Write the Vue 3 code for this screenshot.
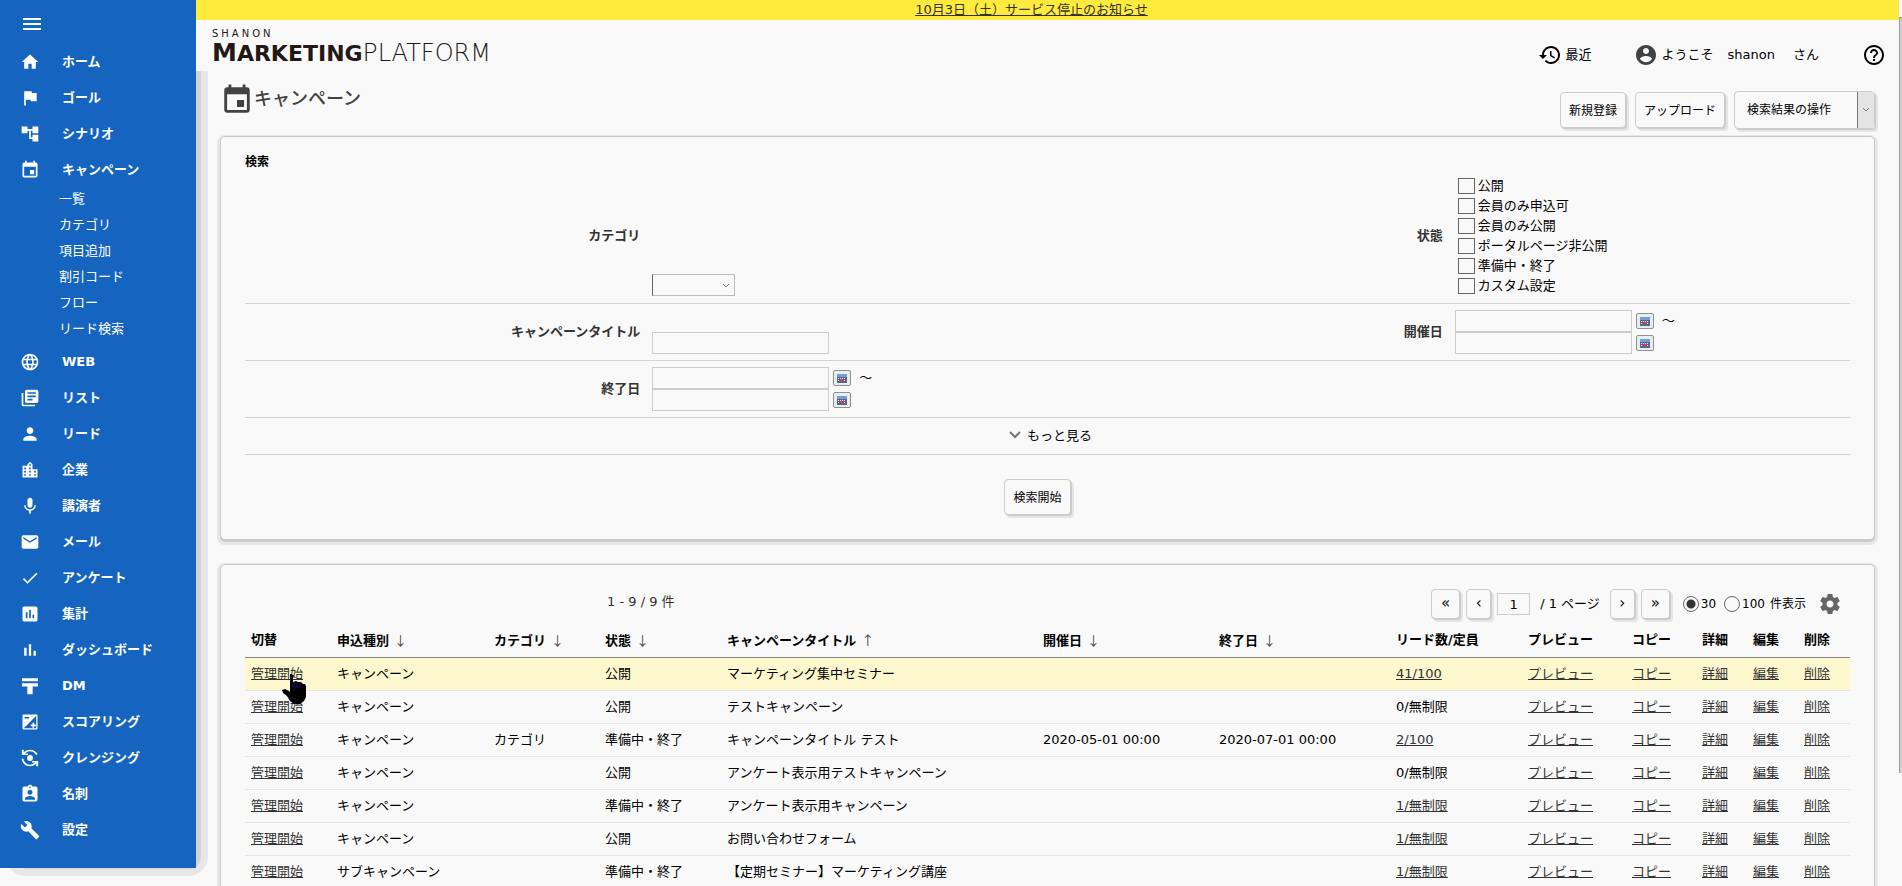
<script setup>
import { ref } from 'vue'

const calendarPath =
  'M17 12h-5v5h5v-5zM16 1v2H8V1H6v2H5c-1.11 0-1.99.9-1.99 2L3 19c0 1.1.89 2 2 2h14c1.1 0 2-.9 2-2V5c0-1.1-.9-2-2-2h-1V1h-2zm3 18H5V8h14v11z'

const menu = [
  { label: 'ホーム', icon: 'M10 20v-6h4v6h5v-8h3L12 3 2 12h3v8z' },
  { label: 'ゴール', icon: 'M14.4 6L14 4H5v17h2v-7h5.6l.4 2h7V6z' },
  { label: 'シナリオ', icon: 'M22 11V3h-7v3H9V3H2v8h7V8h2v10h4v3h7v-8h-7v3h-2V8h2v3z' },
  {
    label: 'キャンペーン',
    icon: calendarPath,
    children: ['一覧', 'カテゴリ', '項目追加', '割引コード', 'フロー', 'リード検索'],
  },
  {
    label: 'WEB',
    icon: 'M11.99 2C6.47 2 2 6.48 2 12s4.47 10 9.99 10C17.52 22 22 17.52 22 12S17.52 2 11.99 2zm6.93 6h-2.95c-.32-1.25-.78-2.45-1.38-3.56 1.84.63 3.37 1.91 4.33 3.56zM12 4.04c.83 1.2 1.48 2.53 1.91 3.96h-3.82c.43-1.43 1.08-2.76 1.91-3.96zM4.26 14C4.1 13.36 4 12.69 4 12s.1-1.36.26-2h3.38c-.08.66-.14 1.32-.14 2s.06 1.34.14 2H4.26zm.82 2h2.95c.32 1.25.78 2.45 1.38 3.56-1.84-.63-3.37-1.9-4.33-3.56zm2.95-8H5.08c.96-1.66 2.49-2.93 4.33-3.56C8.81 5.55 8.35 6.75 8.03 8zM12 19.96c-.83-1.2-1.48-2.53-1.91-3.96h3.82c-.43 1.43-1.08 2.76-1.91 3.96zM14.34 14H9.66c-.09-.66-.16-1.32-.16-2s.07-1.35.16-2h4.68c.09.65.16 1.32.16 2s-.07 1.34-.16 2zm.25 5.56c.6-1.11 1.06-2.31 1.38-3.56h2.95c-.96 1.65-2.49 2.93-4.33 3.56zM16.36 14c.08-.66.14-1.32.14-2s-.06-1.34-.14-2h3.38c.16.64.26 1.31.26 2s-.1 1.36-.26 2h-3.38z',
  },
  {
    label: 'リスト',
    icon: 'M4 6H2v14c0 1.1.9 2 2 2h14v-2H4V6zm16-4H8c-1.1 0-2 .9-2 2v12c0 1.1.9 2 2 2h12c1.1 0 2-.9 2-2V4c0-1.1-.9-2-2-2zm-1 9H9V9h10v2zm-4 4H9v-2h6v2zm4-8H9V5h10v2z',
  },
  {
    label: 'リード',
    icon: 'M12 12c2.21 0 4-1.79 4-4s-1.79-4-4-4-4 1.79-4 4 1.79 4 4 4zm0 2c-2.67 0-8 1.34-8 4v2h16v-2c0-2.66-5.33-4-8-4z',
  },
  {
    label: '企業',
    icon: 'M15 11V5l-3-3-3 3v2H3v14h18V11h-6zm-8 8H5v-2h2v2zm0-4H5v-2h2v2zm0-4H5V9h2v2zm6 8h-2v-2h2v2zm0-4h-2v-2h2v2zm0-4h-2V9h2v2zm0-4h-2V5h2v2zm6 12h-2v-2h2v2zm0-4h-2v-2h2v2z',
  },
  {
    label: '講演者',
    icon: 'M12 14c1.66 0 2.99-1.34 2.99-3L15 5c0-1.66-1.34-3-3-3S9 3.34 9 5v6c0 1.66 1.34 3 3 3zm5.3-3c0 3-2.54 5.1-5.3 5.1S6.7 14 6.7 11H5c0 3.41 2.72 6.23 6 6.72V21h2v-3.28c3.28-.48 6-3.3 6-6.72h-1.7z',
  },
  {
    label: 'メール',
    icon: 'M20 4H4c-1.1 0-1.99.9-1.99 2L2 18c0 1.1.9 2 2 2h16c1.1 0 2-.9 2-2V6c0-1.1-.9-2-2-2zm0 4l-8 5-8-5V6l8 5 8-5v2z',
  },
  { label: 'アンケート', icon: 'M9 16.17L4.83 12l-1.42 1.41L9 19 21 7l-1.41-1.41z' },
  {
    label: '集計',
    icon: 'M19 3H5c-1.1 0-2 .9-2 2v14c0 1.1.9 2 2 2h14c1.1 0 2-.9 2-2V5c0-1.1-.9-2-2-2zM9 17H7v-7h2v7zm4 0h-2V7h2v10zm4 0h-2v-4h2v4z',
  },
  { label: 'ダッシュボード', icon: 'M5 9.2h3V19H5zM10.6 5h2.8v14h-2.8zm5.6 8H19v6h-2.8z' },
  { label: 'DM', icon: 'M2.4 2.8h19.2v3.6H2.4zM2.4 8.8h19.2v3.8h-6.4V22H8.8v-9.4H2.4z' },
  {
    label: 'スコアリング',
    icon: 'M15 17v2h2v-2h2v-2h-2v-2h-2v2h-2v2h2zM19.500 3h-15C3.700 3 3 3.700 3 4.500v15c0 .8.7 1.500 1.500 1.500h15c.8 0 1.500-.7 1.500-1.500v-15c0-.8-.7-1.500-1.500-1.500zM5.500 6H11v1.800H5.500V6zM19.500 19.500h-15l15-15v15z',
  },
  {
    label: 'クレンジング',
    icon: 'M12 8.500a3.500 3.500 0 1 0 0 7 3.500 3.500 0 0 0 0-7zM4.500 2v3.300C6.300 3.200 9 2 12 2c4 0 7.500 2.200 9.200 5.600l-1.900.9C18 5.800 15.200 4 12 4 9.700 4 7.600 5 6.100 6.500H9.500v2H2.200V2zM2 13h2.100c.5 4 3.800 7 7.900 7 2.300 0 4.400-1 5.900-2.500h-3.400v-2h7.300V22h-2.300v-3.300C17.700 20.800 15 22 12 22 6.800 22 2.500 18.200 2 13z',
  },
  {
    label: '名刺',
    icon: 'M19 3h-4.18C14.4 1.84 13.3 1 12 1c-1.3 0-2.400.84-2.820 2H5c-1.100 0-2 .9-2 2v14c0 1.100.9 2 2 2h14c1.100 0 2-.9 2-2V5c0-1.100-.9-2-2-2zm-7 0c.55 0 1 .45 1 1s-.45 1-1 1-1-.45-1-1 .45-1 1-1zm0 4c1.660 0 3 1.340 3 3s-1.340 3-3 3-3-1.340-3-3 1.340-3 3-3zm6 12H6v-1.400c0-2 4-3.100 6-3.100s6 1.100 6 3.100V19z',
  },
  {
    label: '設定',
    icon: 'M22.700 19l-9.100-9.100c.9-2.300.4-5-1.500-6.900-2-2-5-2.400-7.400-1.300L9 6 6 9 1.600 4.700C.4 7.100.9 10.100 2.900 12.100c1.900 1.900 4.600 2.400 6.900 1.500l9.100 9.100c.4.4 1 .4 1.400 0l2.300-2.300c.5-.4.5-1.100.1-1.400z',
  },
]

const statuses = ['公開', '会員のみ申込可', '会員のみ公開', 'ポータルページ非公開', '準備中・終了', 'カスタム設定']

const columns = [
  { key: 'switch', label: '切替' },
  { key: 'type', label: '申込種別', sort: '↓' },
  { key: 'category', label: 'カテゴリ', sort: '↓' },
  { key: 'status', label: '状態', sort: '↓' },
  { key: 'title', label: 'キャンペーンタイトル', sort: '↑' },
  { key: 'start', label: '開催日', sort: '↓' },
  { key: 'end', label: '終了日', sort: '↓' },
  { key: 'leads', label: 'リード数/定員' },
  { key: 'preview', label: 'プレビュー' },
  { key: 'copy', label: 'コピー' },
  { key: 'detail', label: '詳細' },
  { key: 'edit', label: '編集' },
  { key: 'delete', label: '削除' },
]

const rows = [
  { type: 'キャンペーン', status: '公開', title: 'マーケティング集中セミナー', leads: '41/100', linked: true },
  { type: 'キャンペーン', status: '公開', title: 'テストキャンペーン', leads: '0/無制限' },
  {
    type: 'キャンペーン',
    category: 'カテゴリ',
    status: '準備中・終了',
    title: 'キャンペーンタイトル テスト',
    start: '2020-05-01 00:00',
    end: '2020-07-01 00:00',
    leads: '2/100',
    linked: true,
  },
  { type: 'キャンペーン', status: '公開', title: 'アンケート表示用テストキャンペーン', leads: '0/無制限' },
  { type: 'キャンペーン', status: '準備中・終了', title: 'アンケート表示用キャンペーン', leads: '1/無制限', linked: true },
  { type: 'キャンペーン', status: '公開', title: 'お問い合わせフォーム', leads: '1/無制限', linked: true },
  { type: 'サブキャンペーン', status: '準備中・終了', title: '【定期セミナー】マーケティング講座', leads: '1/無制限', linked: true },
]
const actions = ['プレビュー', 'コピー', '詳細', '編集', '削除']

const page = ref('1')
const perPage = ref('30')
</script>

<template>
  <div class="app">
    <aside class="side">
      <nav class="nav" aria-label="メニュー">
        <button class="burger" type="button" aria-label="メニュー開閉">
          <svg viewBox="0 0 24 24" width="24" height="24"><path d="M3 18h18v-2H3v2zm0-5h18v-2H3v2zm0-7v2h18V6H3z" /></svg>
        </button>
        <ul class="menu">
          <li v-for="m in menu" :key="m.label">
            <a class="item" href="#">
              <svg viewBox="0 0 24 24" width="20" height="20"><path :d="m.icon" fill-rule="evenodd" /></svg>
              <span>{{ m.label }}</span>
            </a>
            <ul v-if="m.children" class="sub">
              <li v-for="c in m.children" :key="c"><a href="#">{{ c }}</a></li>
            </ul>
          </li>
        </ul>
      </nav>
    </aside>

    <div class="main">
      <div class="notice"><a href="#">10月3日（土）サービス停止のお知らせ</a></div>
      <header class="head">
        <a class="logo" href="#">
          <span class="logo-top">SHANON</span>
          <span class="logo-main"><b><span class="cap">M</span>ARKETING</b><i><span class="cap">P</span>LATFORM</i></span>
        </a>
        <div class="tools">
          <a class="tool recent" href="#">
            <svg viewBox="0 0 24 24" width="24" height="24"><path d="M13 3c-4.970 0-9 4.030-9 9H1l3.890 3.890.07.14L9 12H6c0-3.870 3.130-7 7-7s7 3.130 7 7-3.130 7-7 7c-1.930 0-3.680-.79-4.940-2.060l-1.420 1.420C8.270 19.990 10.510 21 13 21c4.970 0 9-4.030 9-9s-4.030-9-9-9zm-1 5v5l4.280 2.540.72-1.210-3.500-2.080V8H12z" /></svg>
            最近
          </a>
          <div class="tool user">
            <svg viewBox="0 0 24 24" width="24" height="24"><path d="M12 2C6.480 2 2 6.480 2 12s4.480 10 10 10 10-4.480 10-10S17.520 2 12 2zm0 3c1.660 0 3 1.340 3 3s-1.340 3-3 3-3-1.340-3-3 1.340-3 3-3zm0 14.200c-2.500 0-4.710-1.280-6-3.220.03-1.990 4-3.080 6-3.080 1.990 0 5.970 1.090 6 3.080-1.290 1.940-3.500 3.220-6 3.220z" /></svg>
            <span>ようこそ</span><span>shanon</span><span class="san">さん</span>
          </div>
          <a class="tool" href="#" aria-label="ヘルプ">
            <svg viewBox="0 0 24 24" width="24" height="24"><path d="M11 18h2v-2h-2v2zm1-16C6.480 2 2 6.480 2 12s4.480 10 10 10 10-4.480 10-10S17.520 2 12 2zm0 18c-4.410 0-8-3.590-8-8s3.590-8 8-8 8 3.590 8 8-3.590 8-8 8zm0-14c-2.210 0-4 1.790-4 4h2c0-1.100.9-2 2-2s2 .9 2 2c0 2-3 1.750-3 5h2c0-2.250 3-2.500 3-5 0-2.210-1.790-4-4-4z" /></svg>
          </a>
        </div>
      </header>

      <main class="content">
        <div class="title-row">
          <h1>
            <svg viewBox="0 0 24 24" width="34" height="34"><path :d="calendarPath" /></svg>
            <span>キャンペーン</span>
          </h1>
          <div class="actions">
            <button class="btn" type="button">新規登録</button>
            <button class="btn" type="button">アップロード</button>
            <div class="bulk">
              <select aria-label="検索結果の操作"><option>検索結果の操作</option></select>
              <span class="bulk-arrow"><svg viewBox="0 0 8 6" width="8" height="6"><path d="M1 1l3 3 3-3" /></svg></span>
            </div>
          </div>
        </div>

        <form class="panel search" @submit.prevent>
          <h2>検索</h2>
          <div class="row">
            <label class="name" for="category">カテゴリ</label>
            <div class="field">
              <div class="pick">
                <select id="category"><option></option></select>
                <svg viewBox="0 0 8 6" width="8" height="6"><path d="M1 1l3 3 3-3" /></svg>
              </div>
            </div>
            <span id="status-name" class="name">状態</span>
            <div class="field checks" role="group" aria-labelledby="status-name">
              <label v-for="s in statuses" :key="s"><input type="checkbox" />{{ s }}</label>
            </div>
          </div>
          <div class="row">
            <label class="name" for="title">キャンペーンタイトル</label>
            <div class="field"><input id="title" class="text" type="text" /></div>
            <label class="name" for="start-from">開催日</label>
            <div class="field">
              <div v-for="n in 2" :key="n" class="date">
                <input :id="n === 1 ? 'start-from' : 'start-to'" class="text" type="text" :aria-label="n === 1 ? '開催日 開始' : '開催日 終了'" />
                <button class="cal" type="button" aria-label="日付を選択">
                  <svg viewBox="0 0 10 9" width="10" height="9"><rect width="10" height="9" fill="#55668f" /><rect width="10" height="3" fill="#7b9bd2" /><path d="M1 4.500h8M1 6.500h8" stroke="#dfe5f2" stroke-dasharray="1 1" /><path d="M3 5h4v2H3z" fill="#e2364d" /></svg>
                </button>
                <span v-if="n === 1">～</span>
              </div>
            </div>
          </div>
          <div class="row">
            <label class="name" for="end-from">終了日</label>
            <div class="field">
              <div v-for="n in 2" :key="n" class="date">
                <input :id="n === 1 ? 'end-from' : 'end-to'" class="text" type="text" :aria-label="n === 1 ? '終了日 開始' : '終了日 終了'" />
                <button class="cal" type="button" aria-label="日付を選択">
                  <svg viewBox="0 0 10 9" width="10" height="9"><rect width="10" height="9" fill="#55668f" /><rect width="10" height="3" fill="#7b9bd2" /><path d="M1 4.500h8M1 6.500h8" stroke="#dfe5f2" stroke-dasharray="1 1" /><path d="M3 5h4v2H3z" fill="#e2364d" /></svg>
                </button>
                <span v-if="n === 1">～</span>
              </div>
            </div>
          </div>
          <button class="more" type="button">
            <svg viewBox="0 0 12 8" width="12" height="8"><path d="M1 1l5 5 5-5" /></svg>
            もっと見る
          </button>
          <div class="submit"><button class="btn" type="submit">検索開始</button></div>
        </form>

        <section class="panel list">
          <div class="bar">
            <span class="count">1 - 9 / 9 件</span>
            <div class="pager">
              <button class="btn nav-btn wide" type="button" aria-label="最初">«</button>
              <button class="btn nav-btn" type="button" aria-label="前へ">‹</button>
              <input v-model="page" class="page" type="text" aria-label="ページ" />
              <span class="total">/ 1 ページ</span>
              <button class="btn nav-btn" type="button" aria-label="次へ">›</button>
              <button class="btn nav-btn wide" type="button" aria-label="最後">»</button>
            </div>
            <div class="sizes">
              <label><input v-model="perPage" type="radio" name="size" value="30" />30</label>
              <label><input v-model="perPage" type="radio" name="size" value="100" />100</label>
              <span>件表示</span>
            </div>
            <button class="gear" type="button" aria-label="表示設定">
              <svg viewBox="0 0 24 24" width="24" height="24"><path d="M19.430 12.980c.04-.32.07-.64.07-.98s-.03-.66-.07-.98l2.110-1.650c.19-.15.24-.42.12-.64l-2-3.460c-.12-.22-.39-.3-.61-.22l-2.490 1c-.52-.4-1.080-.73-1.690-.98l-.38-2.650C14.460 2.180 14.250 2 14 2h-4c-.25 0-.46.18-.49.42l-.38 2.650c-.61.25-1.170.59-1.690.98l-2.490-1c-.23-.09-.49 0-.61.22l-2 3.460c-.13.22-.07.49.12.64l2.110 1.650c-.04.32-.07.65-.07.98s.03.66.07.98l-2.110 1.650c-.19.15-.24.42-.12.64l2 3.460c.12.22.39.3.61.22l2.490-1c.52.4 1.080.73 1.690.98l.38 2.650c.03.24.24.42.49.42h4c.25 0 .46-.18.49-.42l.38-2.650c.61-.25 1.170-.59 1.690-.98l2.490 1c.23.09.49 0 .61-.22l2-3.460c.12-.22.07-.49-.12-.64l-2.110-1.650zM12 15.500c-1.930 0-3.500-1.570-3.500-3.500s1.570-3.500 3.500-3.500 3.500 1.570 3.500 3.500-1.570 3.500-3.500 3.500z" /></svg>
            </button>
          </div>
          <table>
            <colgroup><col v-for="c in columns" :key="c.key" :class="'c-' + c.key" /></colgroup>
            <thead>
              <tr>
                <th v-for="c in columns" :key="c.key" scope="col">{{ c.label }}<span v-if="c.sort" class="sort">{{ c.sort }}</span></th>
              </tr>
            </thead>
            <tbody>
              <tr v-for="(r, i) in rows" :key="r.title" :class="{ hover: i === 0 }">
                <td>
                  <a href="#">管理開始</a>
                  <svg v-if="i === 0" class="pointer" viewBox="0 0 26 32" width="26" height="32"><path d="M9 1h2l1 2v6l3-1 2 1 3 0 2 2 2 0 1 2v11l-2 4-4 3h-6l-4-3-3-5-4-3-1-3 3-1 4 2 1 1V2z" fill="#000" /><path d="M10 3h1v8h1v-2h2v3h1v-2h2v3h1v-2h2v4h-9z" fill="#0b0b33" /></svg>
                </td>
                <td>{{ r.type }}</td>
                <td>{{ r.category }}</td>
                <td>{{ r.status }}</td>
                <td>{{ r.title }}</td>
                <td>{{ r.start }}</td>
                <td>{{ r.end }}</td>
                <td><a v-if="r.linked" href="#">{{ r.leads }}</a><template v-else>{{ r.leads }}</template></td>
                <td v-for="a in actions" :key="a"><a href="#">{{ a }}</a></td>
              </tr>
            </tbody>
          </table>
        </section>
      </main>
    </div>
    <div class="track"><div class="thumb"></div></div>
  </div>
</template>

<style>
body {
  background: #f9f9f9;
}
</style>

<style scoped>
.app,
.app * {
  box-sizing: border-box;
}
.app {
  display: flex;
  height: 100vh;
  overflow: hidden;
  background: #f9f9f9;
  color: #000;
  font: 13px/20px 'DejaVu Sans', 'Noto Sans CJK JP', sans-serif;
}
.app button,
.app input,
.app select {
  margin: 0;
  padding: 0;
  font-family: inherit;
  font-size: 13px;
  color: inherit;
  background: transparent;
  border: 0;
  border-radius: 0;
  appearance: none;
}
ul {
  margin: 0;
  padding: 0;
  list-style: none;
}
svg {
  display: block;
  flex: none;
}

/* sidebar */
.side {
  position: relative;
  z-index: 0;
  flex: none;
  width: 196px;
  align-self: flex-start;
}
.side::before,
.side::after {
  content: '';
  position: absolute;
  z-index: -1;
}
.side::before {
  inset: 0 -12px -8px 6px;
  background: #e7e7e7;
  border-radius: 0 0 20px 20px;
}
.side::after {
  inset: 0 -5px -1px 24px;
  background: #d3d3d3;
  border-radius: 0 0 12px 0;
}
.nav {
  padding-bottom: 20px;
  background: #1565c0;
}
.app .burger {
  display: block;
  height: 44px;
  padding: 4px 0 0 20px;
}
.nav svg {
  fill: #fff;
}
.item {
  display: flex;
  align-items: center;
  gap: 22px;
  height: 36px;
  padding-left: 20px;
  color: #fff;
  font-weight: bold;
  text-decoration: none;
}
.sub {
  margin: -2px 0 2px;
}
.sub a {
  display: block;
  padding-left: 59px;
  line-height: 26px;
  color: #fff;
  text-decoration: none;
}

/* top */
.main {
  flex: 1;
  min-width: 0;
  display: flex;
  flex-direction: column;
}
.notice {
  position: relative;
  z-index: 1;
  flex: none;
  height: 20px;
  padding-right: 32px;
  background: #ffeb3b;
  text-align: center;
  line-height: 20px;
}
.notice a {
  color: #333;
}
.head {
  position: relative;
  z-index: 1;
  flex: none;
  display: flex;
  justify-content: space-between;
  height: 51px;
  padding: 8px 13px 0 16px;
  background: #f9f9f9;
}
.logo {
  color: #231815;
  text-decoration: none;
}
.logo span {
  white-space: nowrap;
}
.logo-top {
  display: block;
  font-size: 10px;
  line-height: 12px;
  letter-spacing: 3px;
}
.logo-main {
  display: block;
  font-size: 22px;
  line-height: 25px;
}
.logo-main i {
  font-size: 24px;
  font-style: normal;
  font-weight: 200;
}
.cap {
  font-size: 25px;
}
.tools {
  display: flex;
  align-items: center;
  height: 36px;
  padding-top: 18px;
}
.tool {
  display: flex;
  align-items: center;
  color: #000;
  text-decoration: none;
}
.recent {
  gap: 4px;
  margin-right: 42px;
}
.user {
  gap: 14px;
  margin-right: 43px;
}
.user svg {
  margin-right: -10px;
  fill: #424242;
}
.san {
  margin-left: 4px;
}

/* content */
.content {
  flex: 1;
  display: flex;
  flex-direction: column;
  padding: 0 24px;
}
.title-row {
  flex: none;
  display: flex;
  justify-content: space-between;
  height: 65px;
}
h1 {
  display: flex;
  margin: 12px 0 0;
  color: #424242;
  font-size: 18px;
  font-weight: 500;
  line-height: 32px;
}
h1 svg {
  fill: #424242;
}
.actions {
  display: flex;
  align-items: center;
  gap: 9px;
  padding-top: 13px;
}
.app .btn {
  height: 36px;
  padding: 0 8px 2px;
  border: 1px solid #ccc;
  border-radius: 4px;
  box-shadow: 1px 1px 0 #ccc, 3px 3px 0 #e5e5e5;
  font-size: 12px;
  background: #f9f9f9;
}
.bulk {
  position: relative;
  width: 141px;
  height: 38px;
  border: 1px solid #ccc;
  border-radius: 4px;
  box-shadow: 1px 1px 0 #ccc, 3px 3px 0 #e5e5e5;
}
.app .bulk select {
  width: 100%;
  height: 36px;
  padding-left: 12px;
  font-size: 12px;
}
.bulk-arrow {
  position: absolute;
  top: 0;
  right: 0;
  bottom: 0;
  display: grid;
  place-items: center;
  width: 17px;
  border-left: 1px solid #777;
  background: #e4e4e4;
  pointer-events: none;
}
.bulk-arrow path,
.pick path,
.more path {
  fill: none;
  stroke: #777;
}
.panel {
  border: 1px solid #c8c8c8;
  border-radius: 5px;
  background: #f9f9f9;
  box-shadow: 0 2px 0 #ccc, 0 2px 0 3px #e7e7e7;
}
.search {
  flex: none;
  padding: 17px 24px 24px;
}
h2 {
  margin: 0;
  font-size: 12px;
  line-height: 16px;
}
.row {
  display: grid;
  grid-template-columns: repeat(4, 1fr);
  padding: 6px 0;
  border-bottom: 1px solid #d3d3d3;
}
h2 + .row {
  padding-bottom: 7px;
}
.name {
  align-self: center;
  padding-right: 6px;
  color: #333;
  font-weight: bold;
  text-align: right;
}
.field {
  align-self: end;
  padding-left: 6px;
}
.pick {
  position: relative;
  width: 83px;
}
.app .pick select {
  display: block;
  width: 100%;
  height: 22px;
  border: 1px solid #bbb;
  border-left-color: #666;
}
.pick svg {
  position: absolute;
  right: 5px;
  top: 9px;
  pointer-events: none;
}
.checks {
  padding-left: 9px;
}
.checks label {
  display: flex;
  align-items: center;
  gap: 3px;
  height: 20px;
}
.app .checks input {
  width: 17px;
  height: 16px;
  border: 1px solid #666;
}
.app .text {
  display: block;
  width: 177px;
  height: 22px;
  border: 1px solid #ccc;
}
.date {
  display: flex;
  align-items: center;
  gap: 4px;
}
.date span {
  margin-left: 4px;
}
.app .cal {
  display: grid;
  place-items: center;
  width: 18px;
  height: 16px;
  border: 1px solid #909090;
  border-radius: 2px;
  background: #e6eeee;
}
.app .more {
  display: flex;
  align-items: center;
  justify-content: center;
  gap: 6px;
  width: 100%;
  height: 37px;
  padding: 0 0 3px 6px;
  border-bottom: 1px solid #d3d3d3;
}
.more path {
  stroke-width: 2;
}
.submit {
  padding: 24px 20px 0 0;
  text-align: center;
}
.submit .btn {
  display: inline-block;
  vertical-align: top;
}

/* result list */
.list {
  flex: 1 0 auto;
  margin-top: 24px;
  padding: 24px 24px 32px;
}
.bar {
  display: flex;
  align-items: center;
  height: 30px;
  padding-right: 8px;
}
.count {
  margin-left: 362px;
  margin-right: auto;
  padding-bottom: 4px;
  color: #333;
}
.pager {
  display: flex;
  align-items: center;
  gap: 6px;
}
.app .nav-btn {
  width: 25px;
  height: 30px;
  padding: 0 0 2px;
  font-size: 15px;
}
.app .wide {
  width: 29px;
}
.app .page {
  width: 33px;
  height: 22px;
  border: 1px solid #ccc;
  text-align: center;
}
.total {
  padding: 0 4px;
  white-space: nowrap;
}
.sizes {
  display: flex;
  align-items: center;
  gap: 5px;
  margin: 0 12px 0 13px;
  font-size: 12px;
}
.sizes label {
  display: flex;
  align-items: center;
  gap: 2px;
}
.sizes label:first-child {
  margin-right: 3px;
}
.app .sizes input {
  width: 16px;
  height: 16px;
  border: 1px solid #666;
  border-radius: 50%;
}
.app .sizes input:checked {
  background: radial-gradient(circle, #333 4px, transparent 5px);
}
.gear svg {
  fill: #666;
}
table {
  width: 100%;
  margin-top: 4px;
  table-layout: fixed;
  border-collapse: separate;
  border-spacing: 0;
}
.c-switch { width: 86px; }
.c-type { width: 157px; }
.c-category { width: 111px; }
.c-status { width: 122px; }
.c-start { width: 176px; }
.c-end { width: 177px; }
.c-leads { width: 132px; }
.c-preview { width: 104px; }
.c-copy { width: 70px; }
.c-detail { width: 51px; }
.c-edit { width: 51px; }
.c-delete { width: 52px; }
th,
td {
  position: relative;
  padding: 0 0 0 6px;
  text-align: left;
  white-space: nowrap;
}
th {
  height: 35px;
  border-bottom: 1px solid #888;
}
td {
  height: 33px;
  border-bottom: 1px solid #e5e5e5;
}
td a {
  color: #333;
}
.sort {
  margin-left: 5px;
  color: #444;
  font-family: 'Noto Sans CJK JP', sans-serif;
  font-weight: 400;
}
.hover td {
  background: #fdf8cd;
}
.hover td:first-child {
  z-index: 1;
}
.pointer {
  position: absolute;
  left: 36px;
  top: 15px;
}

/* scroll indicator */
.track {
  flex: none;
  width: 3px;
  height: 100%;
  padding-top: 17px;
}
.thumb {
  height: 87%;
  border-top: 1px solid #999;
  border-left: 1px solid #a0a0a0;
  background: #cdcdcd;
}
</style>
